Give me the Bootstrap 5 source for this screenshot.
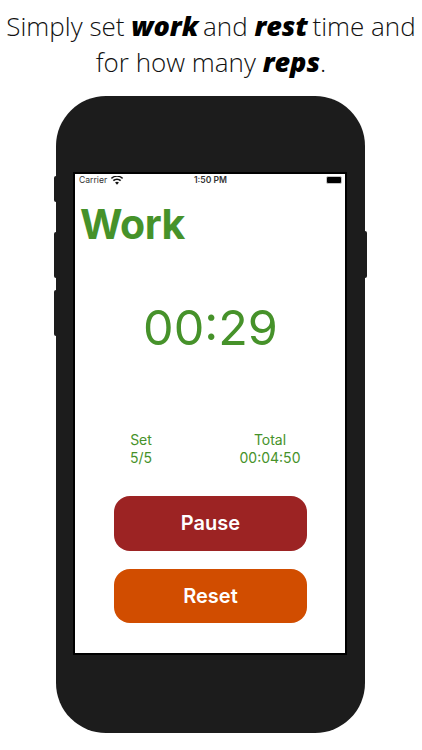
<!DOCTYPE html>
<html lang="en">
<head>
<meta charset="utf-8">
<title>Work timer</title>
<link href="https://cdn.jsdelivr.net/npm/bootstrap@5.3.0/dist/css/bootstrap.min.css" rel="stylesheet">
<style>
html,body{height:750px;overflow:hidden;background:#fff}
.shot{width:422px;height:750px;padding-top:8px}
.headline{font-family:"Open Sans",sans-serif;font-weight:300;font-size:26px;line-height:35px;color:#111;height:88px;margin:0;white-space:nowrap}
.headline b{font-weight:800;font-style:italic;color:#000;font-size:27px}
.headline b.tight{margin-right:-2px}
.phone{position:relative;width:309px;height:637px;margin-left:56px;background:#1c1c1c;border-radius:50px;padding:76px 18px 0 17px}
.sidekey{position:absolute;width:2px;background:#1c1c1c}
.k1{left:-2px;top:80px;height:26px;border-radius:2px 0 0 2px}
.k2{left:-2px;top:136px;height:46px;border-radius:2px 0 0 2px}
.k3{left:-2px;top:194px;height:46px;border-radius:2px 0 0 2px}
.k4{right:-2px;top:135px;height:47px;border-radius:0 2px 2px 0}
.screen{height:483px;background:#fff;border:2px solid #000;font-family:Inter,"Liberation Sans",sans-serif;color:#46922a}
.statusbar{height:12px;padding:0 3px 0 4px;font-size:8.6px;line-height:12px;color:#333}
.statusbar svg{display:block}
.sb-side{flex:1 1 0}
.batt{width:16px;height:8px;background:#000;border:1px solid #c4c4c4;border-radius:2px}
.title{font-size:41px;font-weight:700;line-height:50px;margin:13px 0 0 5px;letter-spacing:-.5px}
.clock{font-size:48.5px;line-height:60px;margin-top:49px;padding-left:1px;font-weight:400}
.stats{width:209px;margin:73px 0 0 26px;font-size:14px;line-height:18px}
.stat-a{width:80px}
.stat-b{width:80px}
.acts{margin:29px 0 0 39px;width:193px;gap:18px}
.act{height:54.5px;border:0;border-radius:16px;color:#fff;font-size:20px;font-weight:600;padding:0;font-family:Inter,"Liberation Sans",sans-serif}
.act-pause{background:#9c2323}
.act-pause:hover,.act-pause:focus{background:#9c2323;color:#fff}
.act-reset{background:#d14d00}
.act-reset:hover,.act-reset:focus{background:#d14d00;color:#fff}
</style>
</head>
<body>
<div class="shot">
  <p class="headline text-center">Simply set <b class="tight">work</b> and <b class="tight">rest</b> time and<br>for how many <b>reps</b>.</p>
  <div class="phone">
    <span class="sidekey k1"></span><span class="sidekey k2"></span><span class="sidekey k3"></span><span class="sidekey k4"></span>
    <div class="screen d-flex flex-column">
      <div class="statusbar d-flex align-items-center">
        <div class="sb-side d-flex align-items-center gap-1"><span>Carrier</span>
          <svg width="12" height="9" viewBox="0 0 11 8"><path d="M5.5 8 3.7 5.9a2.7 2.7 0 0 1 3.6 0zM2.7 4.8 1.6 3.6a5.9 5.9 0 0 1 7.8 0L8.3 4.8a4.3 4.3 0 0 0-5.6 0zM.7 2.6 0 1.5a8.3 8.3 0 0 1 11 0l-.7 1.1a6.9 6.9 0 0 0-9.6 0z" fill="#111"/></svg>
        </div>
        <span class="fw-semibold">1:50 PM</span>
        <div class="sb-side d-flex justify-content-end"><span class="batt"></span></div>
      </div>
      <div class="title">Work</div>
      <div class="clock text-center">00:29</div>
      <div class="stats d-flex justify-content-between text-center">
        <div class="stat-a">Set<br>5/5</div>
        <div class="stat-b">Total<br>00:04:50</div>
      </div>
      <div class="acts d-flex flex-column">
        <button type="button" class="btn act act-pause">Pause</button>
        <button type="button" class="btn act act-reset">Reset</button>
      </div>
    </div>
  </div>
</div>
<script src="https://cdn.jsdelivr.net/npm/bootstrap@5.3.0/dist/js/bootstrap.bundle.min.js"></script>
</body>
</html>
